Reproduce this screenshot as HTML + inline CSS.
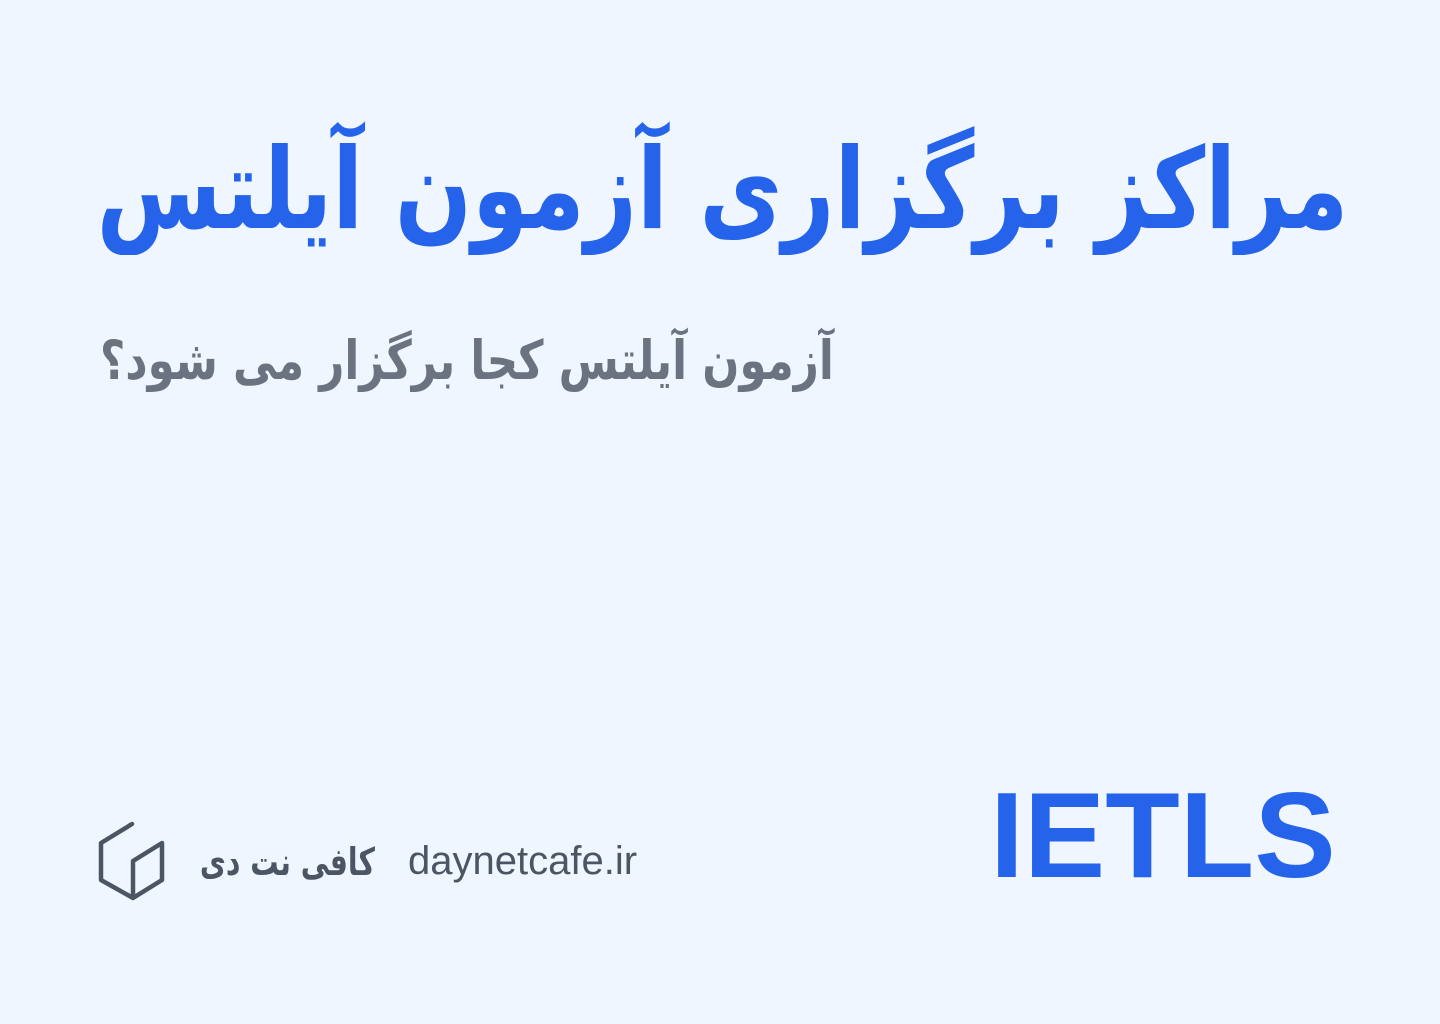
<!DOCTYPE html>
<html><head><meta charset="utf-8"><style>
html,body{margin:0;padding:0;}
body{width:1440px;height:1024px;background:#eff6ff;position:relative;overflow:hidden;font-family:"DejaVu Sans","Liberation Sans",sans-serif;}
.t{position:absolute;white-space:nowrap;}
#title{right:92px;top:118px;font-size:112px;font-weight:bold;color:#2563eb;direction:rtl;line-height:1.3;transform:scaleX(0.808);transform-origin:right center;}
#sub{left:100px;top:326px;font-size:54px;font-weight:bold;color:#6b7280;direction:rtl;line-height:1.3;transform:scaleX(0.807);transform-origin:left center;}
#ielts{left:990px;top:768px;font-family:"Liberation Sans",sans-serif;font-weight:bold;font-size:122px;color:#2563eb;line-height:1.1;}
#dom{left:408px;top:837px;font-family:"Liberation Sans",sans-serif;font-size:40px;color:#4b5563;line-height:1.2;}
#brand{right:1065px;top:838px;font-size:38px;font-weight:bold;color:#4b5563;direction:rtl;line-height:1.3;transform:scaleX(0.745);transform-origin:right center;}
</style></head><body>
<div class="t" id="title">مراکز برگزاری آزمون آیلتس</div>
<div class="t" id="sub">آزمون آیلتس کجا برگزار می شود؟</div>
<svg style="position:absolute;left:0;top:0" width="1440" height="1024"><path d="M132 824 L101 843 L101 880 L133 898 L162 880 L162 843 L133 861 L133 898" fill="none" stroke="#4b5563" stroke-width="4.5" stroke-linejoin="round" stroke-linecap="round"/></svg>
<div class="t" id="brand">کافی نت دی</div>
<div class="t" id="dom">daynetcafe.ir</div>
<div class="t" id="ielts">IETLS</div>
</body></html>
